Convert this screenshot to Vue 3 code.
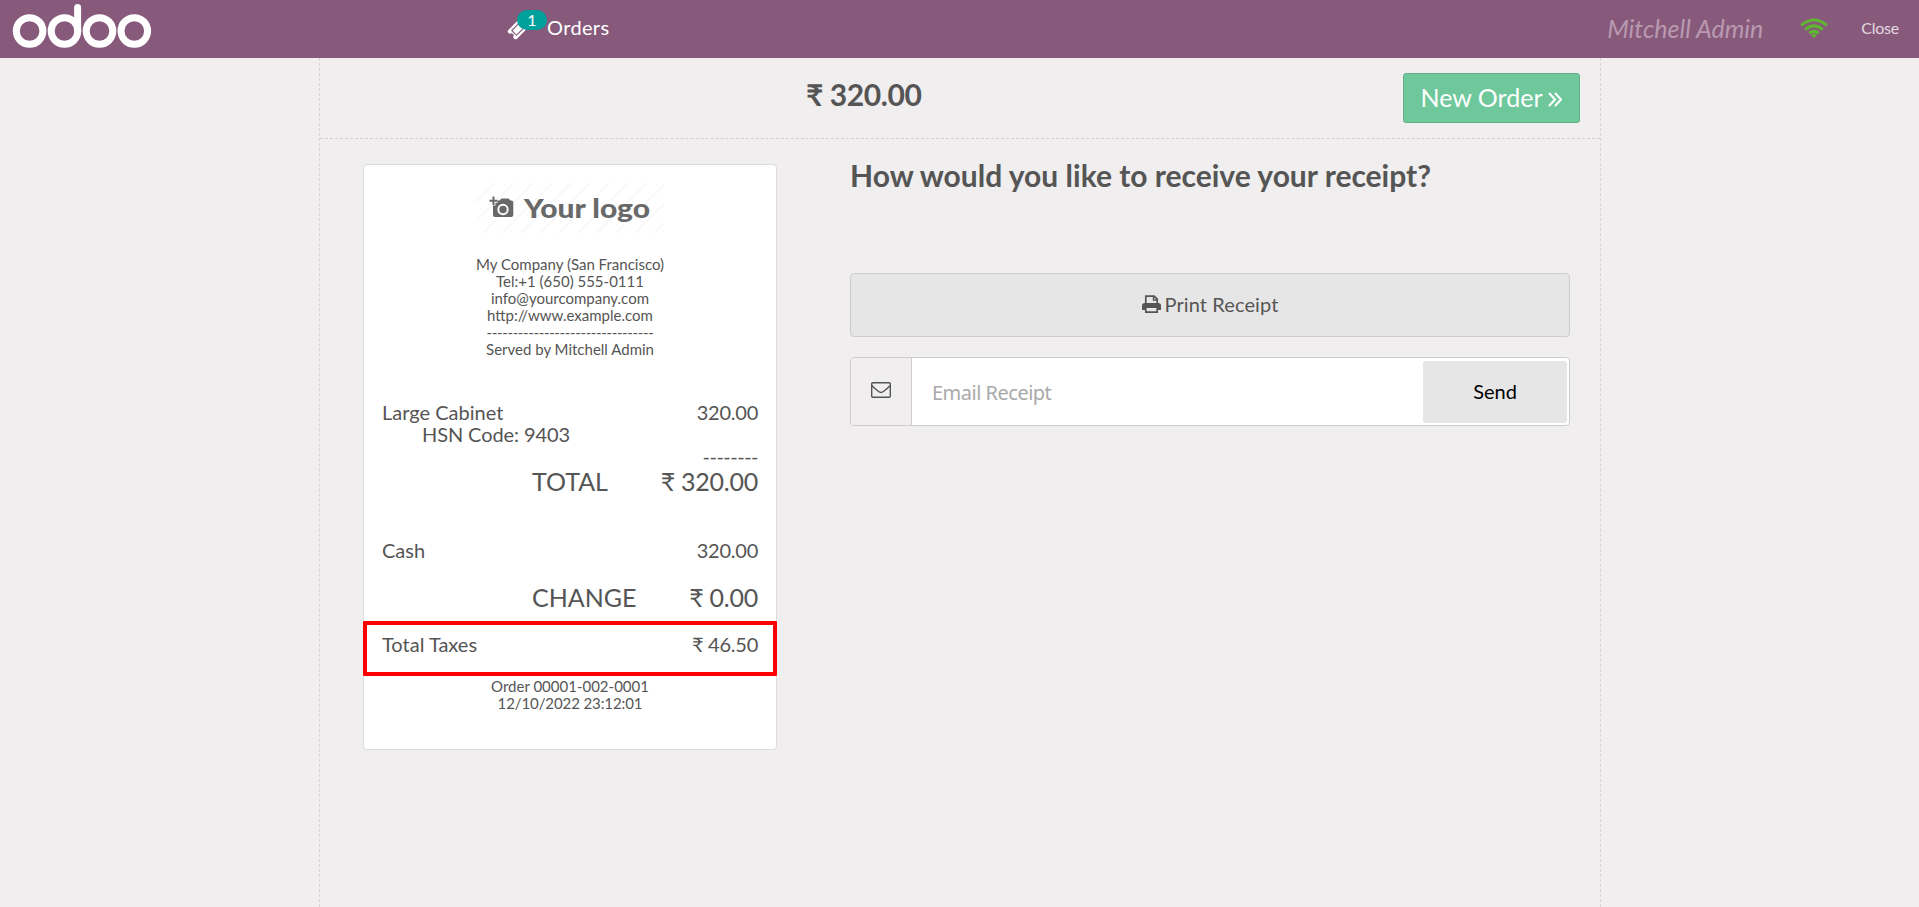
<script setup>
const contact = [
  'My Company (San Francisco)',
  'Tel:+1 (650) 555-0111',
  'info@yourcompany.com',
  'http://www.example.com',
]
</script>

<template>
  <div class="pos">
    <header class="topbar">
      <svg class="brand" width="152" height="58" viewBox="0 0 152 58" fill="none" stroke="#fff" stroke-width="7">
        <circle cx="29.6" cy="31" r="13.3" />
        <circle cx="64.5" cy="31" r="13.3" />
        <circle cx="99.5" cy="31" r="13.3" />
        <circle cx="134.3" cy="31" r="13.3" />
        <path d="M77.6 7.4V31" stroke-linecap="round" />
      </svg>
      <div class="orders">
        <svg class="ticket" width="22" height="22" viewBox="0 0 1792 1792" fill="#fff">
          <path d="M1024 452l316 316-572 572-316-316zM813 1431l618-618q19-19 19-45t-19-45l-362-362q-18-18-45-18t-45 18L361 979q-19 19-19 45t19 45l362 362q18 18 45 18t45-18zM1702 794L795 1702q-37 37-90.500 37t-90.500-37l-126-126q56-56 56-136t-56-136-136-56-136 56L91 1178q-37-37-37-90.500T91 997L998 91q37-37 90.500-37t90.500 37l125 125q-56 56-56 136t56 136 136 56 136-56l126 125q37 37 37 90.500t-37 90.500z" />
        </svg>
        <span class="badge">1</span>
        <span class="orders-label">Orders</span>
      </div>
      <div class="user">Mitchell Admin</div>
      <svg class="wifi" width="28" height="20" viewBox="0 0 28 20" fill="none" stroke="#5fb72f" stroke-width="3.100">
        <path d="M1.200 7.400Q14-3.400 26.800 7.400" />
        <path d="M5.300 11.500Q14 4.200 22.700 11.500" />
        <path d="M9.300 15.300Q14 11.500 18.700 15.300" />
        <path d="M11.200 17.200Q14 15 16.800 17.200L14 20z" fill="#5fb72f" stroke="none" />
      </svg>
      <div class="close">Close</div>
    </header>

    <main class="screen">
      <div class="head">
        <h1 class="amount">₹ 320.00</h1>
        <button class="next">
          <span>New Order</span>
          <svg width="14" height="15" viewBox="0 0 14 15" fill="none" stroke="#fff" stroke-width="2.100">
            <path d="M1 1l6 6.500L1 14M7 1l6 6.500L7 14" />
          </svg>
        </button>
      </div>
      <div class="body">
        <section class="receipt">
          <svg class="logo" width="188" height="50" viewBox="0 0 188 50">
            <defs>
              <pattern id="hatch" width="19" height="19" patternUnits="userSpaceOnUse">
                <path d="M-2 21L21-2M-2 2L2-2M17 21L21 17" stroke="#f9f9f9" stroke-width="2" />
              </pattern>
            </defs>
            <rect width="188" height="50" fill="url(#hatch)" />
            <path d="M19 17.500h4.500l2-2h7l2 2h.8a2 2 0 0 1 2 2V32a2 2 0 0 1-2 2H19a2 2 0 0 1-2-2V22h2z" fill="#696969" />
            <circle cx="27" cy="26.500" r="4.700" fill="#696969" stroke="#fff" stroke-width="1.900" />
            <path d="M17.500 13.500v9M13.500 17.700h8" stroke="#fff" stroke-width="4" />
            <path d="M17.500 13.500v8.500M13.500 17.700h8" stroke="#696969" stroke-width="2" />
            <text x="48" y="35" textLength="126" lengthAdjust="spacingAndGlyphs">Your logo</text>
          </svg>
          <div class="contact">
            <div v-for="line in contact" :key="line">{{ line }}</div>
            <div class="divider">--------------------------------</div>
            <div>Served by Mitchell Admin</div>
          </div>
          <div class="row item"><span>Large Cabinet</span><span class="num">320.00</span></div>
          <div class="row hsn">HSN Code: 9403</div>
          <div class="row rule">--------</div>
          <div class="row big"><span>TOTAL</span><span class="num">₹ 320.00</span></div>
          <div class="row cash"><span>Cash</span><span class="num">320.00</span></div>
          <div class="row big change"><span>CHANGE</span><span class="num">₹ 0.00</span></div>
          <div class="row taxes"><span>Total Taxes</span><span class="num">₹ 46.50</span></div>
          <div class="order-data">
            <div>Order 00001-002-0001</div>
            <div class="date">12/10/2022 23:12:01</div>
          </div>
          <div class="highlight"></div>
        </section>

        <section class="options">
          <h2>How would you like to receive your receipt?</h2>
          <button class="print">
            <svg width="19" height="19" viewBox="0 0 19 19">
              <path d="M3.800 8.500V1.200h8.400l3 3v4.300" fill="none" stroke="#555" stroke-width="1.700" />
              <path d="M11.500 1v4h4" fill="none" stroke="#555" stroke-width="1.400" />
              <path d="M2.700 8h13.600Q19 8 19 10.700V14.500q0 .6-.6.600H15.500V12.300H3.500V15.100H.6Q0 15.100 0 14.500V10.700Q0 8 2.700 8z" fill="#555" />
              <path d="M3.800 12.200v5h11.400v-5z" fill="none" stroke="#555" stroke-width="1.700" />
            </svg>
            <span>Print Receipt</span>
          </button>
          <div class="email">
            <div class="mail-icon">
              <svg width="20" height="16" viewBox="0 0 20 16" fill="none" stroke="#555" stroke-width="1.400">
                <rect x=".7" y=".7" width="18.600" height="14.600" rx="1.200" />
                <path d="M.8 3.500Q3.500 6.500 7.300 9.200Q10 11.700 12.700 9.200Q16.500 6.500 19.200 3.500" />
              </svg>
            </div>
            <input type="text" placeholder="Email Receipt" />
            <button class="send">Send</button>
          </div>
        </section>
      </div>
    </main>
  </div>
</template>

<style>
body {
  margin: 0;
  overflow: hidden;
}
</style>

<style scoped>
.pos {
  height: 907px;
  display: flex;
  flex-direction: column;
  background: #f0eeee;
  color: #555;
  font-family: Lato, "Open Sans", sans-serif;
  font-size: 20px;
}
.pos * {
  box-sizing: border-box;
}
button {
  font-family: inherit;
  padding: 0;
  display: flex;
  align-items: center;
  justify-content: center;
}
.topbar {
  height: 58px;
  flex: none;
  display: flex;
  background: #875a7b;
  color: #fff;
}
.brand {
  flex: none;
}
.orders {
  position: relative;
  margin-left: 355px;
  display: flex;
  line-height: 24px;
}
.ticket {
  margin-top: 18px;
}
.badge {
  position: absolute;
  left: 10px;
  top: 10px;
  width: 30px;
  height: 20px;
  border-radius: 10px;
  background: #00a09d;
  font-size: 16px;
  line-height: 20px;
  text-align: center;
}
.orders-label {
  margin: 15px 0 0 18px;
  letter-spacing: 0.35px;
}
.user {
  margin: 13px 0 0 auto;
  font-size: 25px;
  line-height: 30px;
  font-style: italic;
  color: #b999b0;
}
.wifi {
  margin: 18px 0 0 37px;
}
.close {
  margin: 18px 20px 0 33px;
  font-size: 16px;
  line-height: 20px;
  letter-spacing: -0.25px;
  color: #e3d8e0;
}
.screen {
  flex: 1;
  width: 1282px;
  margin-left: 319px;
  border: dashed #d6d4d4;
  border-width: 0 1px;
}
.head {
  height: 81px;
  display: flex;
  border-bottom: 1px dashed #d2d0d0;
}
.amount {
  margin: 18px 0 0 486px;
  font-size: 30px;
  line-height: 36px;
  letter-spacing: -0.4px;
}
.next {
  width: 177px;
  height: 50px;
  margin: 15px 20px 0 auto;
  gap: 6px;
  border: 1px solid #64af8a;
  border-radius: 3px;
  background: #6ec89b;
  color: #fff;
  font-size: 25px;
}
.next span {
  margin-top: -2px;
}
.next svg {
  margin-top: 3px;
}
.body {
  display: flex;
}
.receipt {
  position: relative;
  width: 414px;
  height: 586px;
  margin: 25px 0 0 43px;
  padding: 18px 18px 0;
  border: 1px solid #dcdcdc;
  border-radius: 4px;
  background: #fff;
}
.logo {
  display: block;
  margin: 0 auto 23px;
}
.logo text {
  font-family: Lato, sans-serif;
  font-weight: 900;
  font-size: 27px;
  fill: #696969;
}
.contact,
.order-data {
  font-size: 15px;
  line-height: 17px;
  text-align: center;
}
.divider {
  letter-spacing: -0.36px;
}
.date {
  letter-spacing: -0.1px;
}
.row {
  display: flex;
  justify-content: space-between;
  line-height: 22px;
}
.num {
  letter-spacing: -0.25px;
}
.item {
  margin-top: 43px;
}
.hsn {
  padding-left: 40px;
  letter-spacing: -0.1px;
}
.rule {
  justify-content: flex-end;
  letter-spacing: -0.5px;
}
.big {
  padding-left: 150px;
  font-size: 25px;
  line-height: 29px;
}
.cash {
  margin-top: 43px;
}
.change {
  margin-top: 22px;
}
.taxes {
  margin-top: 21px;
}
.order-data {
  margin-top: 23px;
}
.highlight {
  position: absolute;
  left: -1px;
  right: -1px;
  top: 456px;
  height: 55px;
  border: 4px solid #fe0000;
  border-radius: 1px;
}
.options {
  width: 720px;
  margin: 18px 0 0 73px;
}
h2 {
  margin: 0 0 80px;
  font-size: 30px;
  line-height: 36px;
}
.print {
  width: 720px;
  height: 64px;
  padding-bottom: 2px;
  gap: 4px;
  border: 1px solid #ccc;
  border-radius: 4px;
  background: #e6e6e6;
  color: #555;
  font-size: 20px;
}
.print span {
  letter-spacing: 0.1px;
}
.email {
  display: flex;
  height: 69px;
  margin-top: 20px;
  border: 1px solid #ccc;
  border-radius: 4px;
  background: #fff;
  overflow: hidden;
}
.mail-icon {
  width: 61px;
  padding: 24px 0 0 20px;
  border-right: 1px solid #ccc;
  background: #f0eeee;
  line-height: 0;
}
input {
  flex: 1;
  min-width: 0;
  padding: 2px 20px 0;
  border: 0;
  outline: 0;
  background: transparent;
  font-family: "Noto Sans", sans-serif;
  font-size: 20px;
  letter-spacing: -0.5px;
}
input::placeholder {
  color: #a9a9a9;
}
.send {
  width: 144px;
  height: 62px;
  margin: 3px 2px 0 0;
  padding-bottom: 2px;
  border: 0;
  border-radius: 3px;
  background: #e6e6e6;
  color: #000;
  font-size: 20px;
}
</style>
